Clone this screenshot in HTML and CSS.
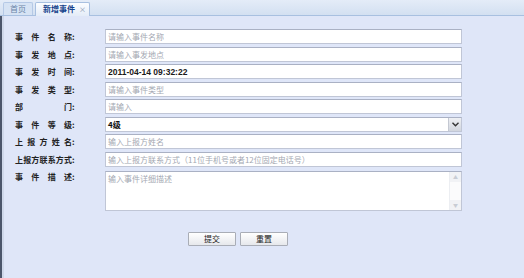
FILE: index.html
```html
<!DOCTYPE html>
<html lang="zh">
<head>
  <meta charset="UTF-8">
  <title>新增事件</title>
  <link rel="stylesheet" href="styles.css">
</head>
<body>
  <div class="tabbar">
    <div class="tab">首页</div>
    <div class="tab active">新增事件<span class="close">×</span></div>
  </div>

  <div class="panel">
    <form class="event-form">
      <label class="lbl"><span class="lbl-text">事件名称</span>:</label>
      <input class="field" type="text" placeholder="请输入事件名称">

      <label class="lbl"><span class="lbl-text">事发地点</span>:</label>
      <input class="field" type="text" placeholder="请输入事发地点">

      <label class="lbl"><span class="lbl-text">事发时间</span>:</label>
      <input class="field value" type="text" value="2011-04-14 09:32:22">

      <label class="lbl"><span class="lbl-text">事发类型</span>:</label>
      <input class="field" type="text" placeholder="请输入事件类型">

      <label class="lbl"><span class="lbl-text">部门</span>:</label>
      <input class="field" type="text" placeholder="请输入">

      <label class="lbl"><span class="lbl-text">事件等级</span>:</label>
      <div class="combo">
        <span class="combo-text">4级</span>
        <span class="combo-btn">
          <svg width="7" height="5" viewBox="0 0 7 5"><path d="M0.5 0.8 L3.5 3.8 L6.5 0.8" fill="none" stroke="#333" stroke-width="1.4"/></svg>
        </span>
      </div>

      <label class="lbl"><span class="lbl-text">上报方姓名</span>:</label>
      <input class="field" type="text" placeholder="输入上报方姓名">

      <label class="lbl"><span class="lbl-text">上报方联系方式</span>:</label>
      <input class="field" type="text" placeholder="输入上报方联系方式（11位手机号或者12位固定电话号）">

      <label class="lbl top"><span class="lbl-text">事件描述</span>:</label>
      <div class="area">
        <textarea placeholder="输入事件详细描述"></textarea>
        <div class="scroll">
          <span class="arrow">▲</span>
          <span class="arrow">▼</span>
        </div>
      </div>
    </form>

    <div class="buttons">
      <button class="btn" type="button">提交</button>
      <button class="btn" type="button">重置</button>
    </div>
  </div>
</body>
</html>
```

FILE: styles.css
```css
body {
  margin: 0;
  font-family: "Noto Sans CJK SC", "DejaVu Sans", sans-serif;
  background-color: #dfe6f8;
  height: 278px;
  overflow: hidden;
}
.tabbar {
  height: 15px;
  display: flex;
  align-items: flex-end;
  gap: 2px;
  padding-left: 3px;
  background: linear-gradient(#e4ecf8, #d3e0f1);
  border-bottom: 1px solid #a8c0e0;
}
.tab {
  height: 13px;
  box-sizing: border-box;
  padding: 0 6px;
  font-size: 8px;
  line-height: 12px;
  color: #6a83a8;
  background: #d6e3f4;
  border: 1px solid #b5c9e6;
  border-bottom: none;
  border-radius: 2px 2px 0 0;
}
.tab.active {
  height: 14px;
  margin-bottom: -1px;
  padding: 0 3px 0 7px;
  font-weight: bold;
  color: #15428b;
  background: linear-gradient(#fbfdff, #e4ecf8);
  border-color: #a8c0e0;
}
.close {
  font-size: 7px;
  font-weight: normal;
  color: #7d8ea8;
  margin-left: 4px;
}
.panel {
  height: 262px;
  box-sizing: border-box;
  border-left: 2px solid #4c566b;
  box-shadow: inset 2px 0 0 #cfd8ea;
  padding: 13px 0 0 13px;
}
.event-form {
  display: grid;
  grid-template-columns: 90px 357px;
  row-gap: 2.5px;
  align-items: center;
}
.lbl {
  display: flex;
  font-size: 8px;
  font-weight: bold;
  color: #222;
  line-height: 15px;
}
.lbl-text {
  width: 57px;
  text-align: justify;
  text-align-last: justify;
}
.lbl.top {
  align-self: start;
}
.field {
  height: 15px;
  box-sizing: border-box;
  margin: 0;
  padding: 0 2px;
  border: 1px solid #c0c6d6;
  border-top-color: #aab1c4;
  background: #fff;
  font-family: "Noto Sans CJK SC", sans-serif;
  font-size: 8px;
  color: #000;
  outline: none;
}
.field::placeholder {
  color: #a4a8b2;
}
.field.value {
  font-family: "Liberation Sans", "DejaVu Sans", sans-serif;
  font-size: 8.5px;
  font-weight: bold;
  color: #1a1a1a;
}
.combo {
  height: 15px;
  box-sizing: border-box;
  display: flex;
  border: 1px solid #c0c6d6;
  border-top-color: #aab1c4;
  background: #fff;
}
.combo-text {
  flex: 1;
  padding-left: 2px;
  font-size: 8px;
  font-weight: bold;
  line-height: 13px;
  color: #111;
}
.combo-btn {
  width: 12px;
  display: flex;
  align-items: center;
  justify-content: center;
  background: linear-gradient(#eef0f4, #d2d6de);
  border-left: 1px solid #c4c8d2;
}
.area {
  display: flex;
  height: 40px;
  margin-top: 1.5px;
  box-sizing: border-box;
  border: 1px solid #c0c6d6;
  border-top-color: #aab1c4;
  background: #fff;
}
.area textarea {
  flex: 1;
  border: none;
  resize: none;
  outline: none;
  padding: 1px 2px;
  font-family: "Noto Sans CJK SC", sans-serif;
  font-size: 8px;
  line-height: 11px;
}
.area textarea::placeholder {
  color: #a4a8b2;
}
.scroll {
  width: 11px;
  display: flex;
  flex-direction: column;
  justify-content: space-between;
  background: #fbfbfc;
  border-left: 1px solid #eceef2;
}
.arrow {
  height: 10px;
  font-size: 5px;
  line-height: 10px;
  text-align: center;
  color: #c8ccd4;
  background: #f1f2f5;
}
.buttons {
  display: flex;
  gap: 4px;
  padding: 21px 0 0 173px;
}
.btn {
  width: 48px;
  height: 14px;
  padding: 0;
  font-family: "Noto Sans CJK SC", sans-serif;
  font-size: 8px;
  line-height: 12px;
  color: #222;
  background: linear-gradient(#ffffff, #e6e8ec);
  border: 1px solid #a9adb6;
  border-radius: 1px;
}
```
